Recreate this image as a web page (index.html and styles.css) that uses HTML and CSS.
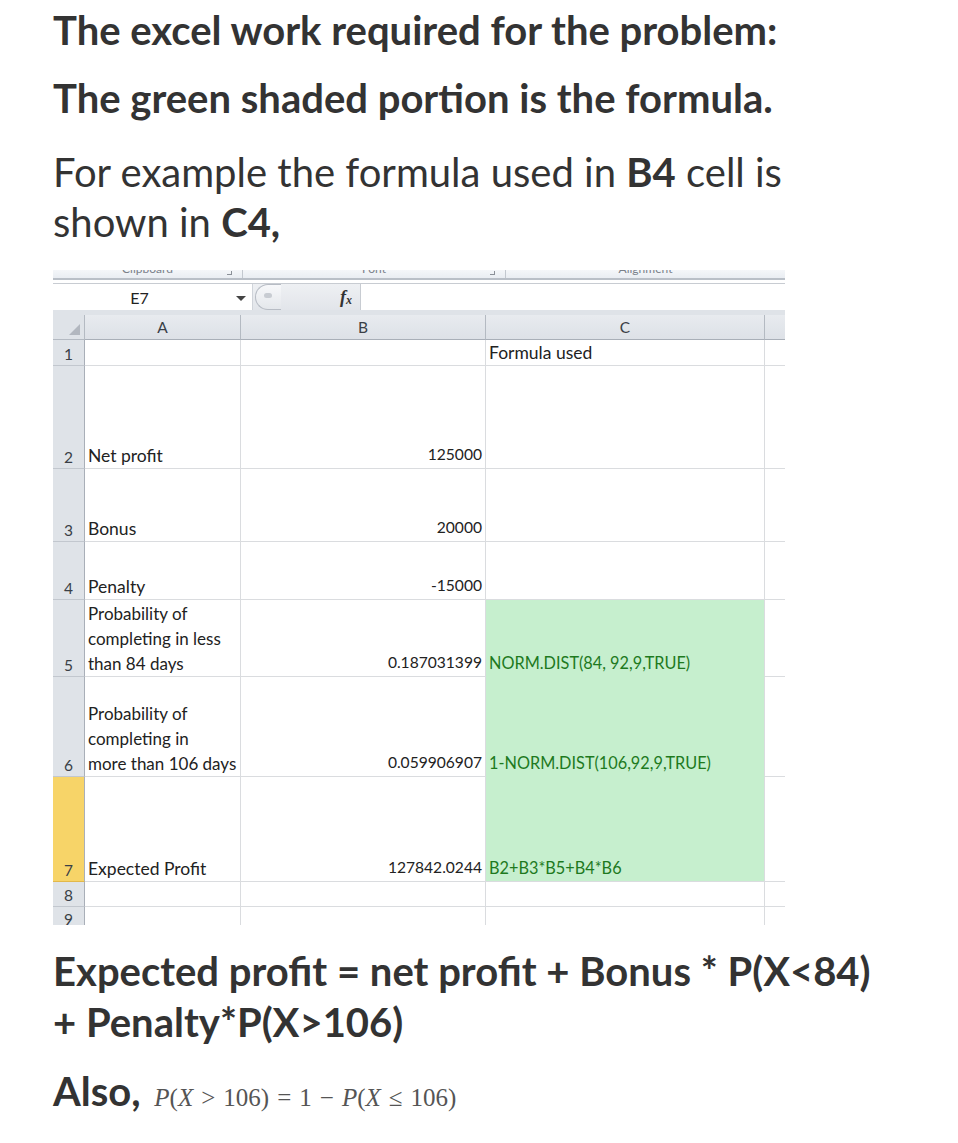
FILE: index.html
```html
<!DOCTYPE html>
<html>
<head>
<meta charset="utf-8">
<link rel="stylesheet" href="styles.css">
</head>
<body>
<div class="page">
  <p class="head h1">The excel work required for the problem:</p>
  <p class="head h2">The green shaded portion is the formula.</p>
  <p class="para">For example the formula used in <b>B4</b> cell is shown in <b>C4,</b></p>

  <div class="sheet">
    <div class="ribbon">
      <div class="grp g1"><span class="glabel">Clipboard</span><span class="launch"></span></div>
      <div class="grp g2"><span class="glabel">Font</span><span class="launch"></span></div>
      <div class="grp g3"><span class="glabel">Alignment</span></div>
    </div>
    <div class="fbar">
      <div class="namebox"><span class="nb-text">E7</span><span class="dd"></span></div>
      <div class="fxwrap"><span class="pill"><span class="knob"></span></span><span class="fx">f<sub>x</sub></span></div>
      <div class="finput"></div>
    </div>
    <div class="grid">
      <div class="corner"><span class="tri"></span></div>
      <div class="ch">A</div>
      <div class="ch">B</div>
      <div class="ch">C</div>
      <div class="ch last"></div>

      <div class="rh">1</div><div class="c"></div><div class="c"></div><div class="c">Formula used</div><div class="c last"></div>
      <div class="rh">2</div><div class="c">Net profit</div><div class="c num">125000</div><div class="c"></div><div class="c last"></div>
      <div class="rh">3</div><div class="c">Bonus</div><div class="c num">20000</div><div class="c"></div><div class="c last"></div>
      <div class="rh">4</div><div class="c">Penalty</div><div class="c num">-15000</div><div class="c"></div><div class="c last"></div>
      <div class="rh">5</div><div class="c wrap"><span>Probability of<br>completing in less<br>than 84 days</span></div><div class="c num">0.187031399</div><div class="c good">NORM.DIST(84, 92,9,TRUE)</div><div class="c last"></div>
      <div class="rh">6</div><div class="c wrap"><span>Probability of<br>completing in<br>more than 106 days</span></div><div class="c num">0.059906907</div><div class="c good">1-NORM.DIST(106,92,9,TRUE)</div><div class="c last"></div>
      <div class="rh sel">7</div><div class="c">Expected Profit</div><div class="c num">127842.0244</div><div class="c good gl">B2+B3*B5+B4*B6</div><div class="c last"></div>
      <div class="rh">8</div><div class="c"></div><div class="c"></div><div class="c"></div><div class="c last"></div>
      <div class="rh r9">9</div><div class="c r9"></div><div class="c r9"></div><div class="c r9"></div><div class="c last r9"></div>
    </div>
  </div>

  <p class="head h3">Expected profit = net profit + Bonus * P(X&lt;84) + Penalty*P(X&gt;106)</p>
  <p class="head h4">Also, <span class="math"><i>P</i>(<i>X</i><span class="op">&gt;</span>106)<span class="op">=</span>1<span class="op">−</span><i>P</i>(<i>X</i><span class="op">≤</span>106)</span></p>
</div>
</body>
</html>
```

FILE: styles.css
```css
* { box-sizing: border-box; }
html, body { margin: 0; padding: 0; background: #fff; }
.page {
  padding: 5px 0 0 53px;
  font-family: Lato, "Open Sans", sans-serif;
  color: #333;
}
p { margin: 0; }
.head {
  font-weight: 700;
  font-size: 40px;
  line-height: 50px;
  color: #333;
}
.h1 { margin-bottom: 18px; }
.h2 { margin-bottom: 24px; }
.para {
  font-size: 40px;
  line-height: 50px;
  width: 800px;
  color: #333;
}
.para b { font-weight: 700; }

.sheet {
  margin-top: 23px;
  width: 732px;
  font-family: Lato, "Open Sans", sans-serif;
  color: #222;
}
.ribbon {
  height: 10px;
  display: flex;
  background: linear-gradient(#f4f6f9, #e9edf2);
  border-bottom: 2px solid #b9bfc7;
  overflow: hidden;
  position: relative;
}
.grp {
  position: relative;
  height: 8px;
  border-right: 1px solid #c3c8cf;
}
.g1 { width: 190px; }
.g2 { width: 263px; }
.g3 { flex: 1; border-right: none; }
.glabel {
  position: absolute;
  top: -9px;
  left: 0; right: 0;
  text-align: center;
  font-size: 12px;
  color: #7a808a;
}
.launch {
  position: absolute;
  right: 10px;
  top: 1px;
  width: 5px;
  height: 4px;
  border-right: 1px solid #8b9098;
  border-bottom: 1px solid #8b9098;
}
.fbar {
  margin-top: 3px;
  height: 32px;
  display: flex;
  border-top: 1px solid #c8ccd2;
  border-bottom: 5px solid #dfe3e8;
  background: #fff;
}
.namebox {
  width: 200px;
  position: relative;
  display: flex;
  align-items: center;
  justify-content: center;
  border-right: 1px solid #d0d4da;
  font-size: 16px;
  color: #222;
  padding-right: 26px;
}
.dd {
  position: absolute;
  right: 6px;
  top: 12px;
  border-left: 5px solid transparent;
  border-right: 5px solid transparent;
  border-top: 5px solid #444;
}
.fxwrap {
  width: 108px;
  display: flex;
  align-items: center;
  background: linear-gradient(#eef0f3, #e2e5ea);
  border-right: 1px solid #c8ccd2;
  position: relative;
}
.pill {
  width: 26px;
  height: 26px;
  margin-left: 2px;
  border-radius: 13px 0 0 13px;
  border: 1px solid #b7bcc4;
  border-right: none;
  background: linear-gradient(#f7f8fa, #e4e7eb);
  position: relative;
}
.knob {
  position: absolute;
  left: 8px; top: 8px;
  width: 8px; height: 5px;
  border-radius: 3px;
  background: #c8ccd2;
}
.fx {
  margin-left: auto;
  margin-right: 8px;
  font-family: "Liberation Serif", serif;
  font-style: italic;
  font-weight: 700;
  font-size: 18px;
  color: #333;
}
.fx sub { font-size: 12px; vertical-align: -1px; }
.finput { flex: 1; }

.grid {
  display: grid;
  grid-template-columns: 32px 156px 245px 279px 20px;
  grid-template-rows: 25px 26px 103px 73px 58px 77px 100px 105px 25px 18px;
  font-size: 17.5px;
}
.corner {
  background: #dfe3e8;
  border-right: 1px solid #b4bac2;
  border-bottom: 1px solid #b4bac2;
  position: relative;
}
.tri {
  position: absolute;
  right: 4px; bottom: 4px;
  width: 0; height: 0;
  border-left: 11px solid transparent;
  border-bottom: 11px solid #b2b7bf;
}
.ch {
  background: linear-gradient(#e8ebef, #dde1e7);
  border-right: 1px solid #b4bac2;
  border-bottom: 1px solid #a9afb8;
  display: flex;
  align-items: center;
  justify-content: center;
  font-size: 15.5px;
  color: #3a3f46;
}
.ch.last { border-right: none; }
.rh {
  background: #dfe3e8;
  border-right: 1px solid #a9afb8;
  border-bottom: 1px solid #c2c7ce;
  display: flex;
  align-items: flex-end;
  justify-content: center;
  padding-bottom: 2px;
  font-size: 15.5px;
  color: #3a3f46;
}
.rh.sel { background: #f7d468; border-bottom-color: #e2b84b; }
.c {
  border-right: 1px solid #dadcdf;
  border-bottom: 1px solid #dadcdf;
  display: flex;
  align-items: flex-end;
  padding: 0 3px 0 3px;
  line-height: 25px;
  white-space: nowrap;
  overflow: visible;
  color: #222;
}
.c.last { border-right: none; }
.c.wrap { font-size: 17px; }
.c.num { justify-content: flex-end; font-size: 15.6px; padding-bottom: 1px; }
.c.good {
  background: #c6efce;
  color: #1e7a1e;
  font-size: 16.3px;
  padding-bottom: 1px;
  border-bottom-color: #c6efce;
}
.c.good.gl { border-bottom-color: #dadcdf; }
.r9 { border-bottom: none; }
.rh.r9 { align-items: flex-start; padding-top: 3px; overflow: hidden; }

.h3 {
  margin-top: 21px;
  width: 845px;
  line-height: 51px;
}
.h4 { margin-top: 18px; }
.math {
  font-family: "Liberation Serif", serif;
  font-weight: 400;
  font-size: 25px;
  color: #555;
  margin-left: 4px;
}
.op { margin: 0 8px; }
```
